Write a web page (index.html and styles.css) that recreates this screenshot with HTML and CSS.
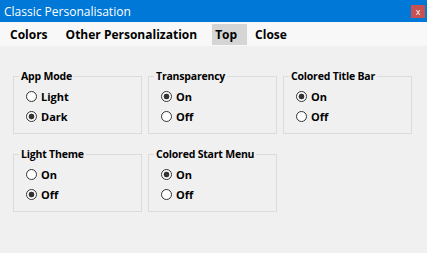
FILE: index.html
```html
<!DOCTYPE html>
<html lang="en">
<head>
    <meta charset="UTF-8">
    <title>Classic Personalisation</title>
    <link rel="stylesheet" href="styles.css">
</head>
<body>
    <div class="window">
        <div class="titlebar">
            <span class="title">Classic Personalisation</span>
            <button class="close-btn">x</button>
        </div>

        <nav class="menubar">
            <span class="menu-item">Colors</span>
            <span class="menu-item">Other Personalization</span>
            <span class="menu-item active">Top</span>
            <span class="menu-item">Close</span>
        </nav>

        <div class="options">
            <fieldset class="group">
                <legend>App Mode</legend>
                <label class="radio"><input type="radio" name="appMode" /><span>Light</span></label>
                <label class="radio"><input type="radio" name="appMode" checked /><span>Dark</span></label>
            </fieldset>
            <fieldset class="group">
                <legend>Transparency</legend>
                <label class="radio"><input type="radio" name="transparency" checked /><span>On</span></label>
                <label class="radio"><input type="radio" name="transparency" /><span>Off</span></label>
            </fieldset>
            <fieldset class="group">
                <legend>Colored Title Bar</legend>
                <label class="radio"><input type="radio" name="titleBar" checked /><span>On</span></label>
                <label class="radio"><input type="radio" name="titleBar" /><span>Off</span></label>
            </fieldset>
            <fieldset class="group">
                <legend>Light Theme</legend>
                <label class="radio"><input type="radio" name="lightTheme" /><span>On</span></label>
                <label class="radio"><input type="radio" name="lightTheme" checked /><span>Off</span></label>
            </fieldset>
            <fieldset class="group">
                <legend>Colored Start Menu</legend>
                <label class="radio"><input type="radio" name="startMenu" checked /><span>On</span></label>
                <label class="radio"><input type="radio" name="startMenu" /><span>Off</span></label>
            </fieldset>
        </div>
    </div>
</body>
</html>
```

FILE: styles.css
```css
html {
    box-sizing: border-box;
}
*, *:before, *:after {
    box-sizing: inherit;
}
body {
    margin: 0;
    font-family: 'Open Sans', 'Noto Sans', sans-serif;
    color: #000;
    background-color: #f0f0f0;
}
.window {
    width: 427px;
    height: 253px;
    overflow: hidden;
}
/* Title bar */
.titlebar {
    height: 22px;
    display: flex;
    align-items: center;
    justify-content: space-between;
    padding: 0 2px 0 4px;
    background: #0078d7;
    color: #fff;
}
.title {
    font-size: 12px;
}
.close-btn {
    width: 14px;
    height: 13px;
    margin-top: 1px;
    padding: 0;
    border: 0;
    background: #c75050;
    color: #fff;
    font-family: inherit;
    font-size: 9px;
    line-height: 12px;
}
/* Menu */
.menubar {
    height: 24px;
    display: flex;
    gap: 5px;
    padding: 2px 0 1px 7px;
    background: #f8f8f8;
}
.menu-item {
    display: flex;
    align-items: center;
    padding: 0 10px 0 3px;
    font-size: 12px;
    font-weight: 700;
}
.menu-item.active {
    background: #d5d5d5;
}
/* Group boxes */
.options {
    display: grid;
    grid-template-columns: 129px 129px 129px;
    column-gap: 6px;
    row-gap: 13px;
    padding: 23px 0 0 13px;
}
.group {
    margin: 0;
    min-width: 0;
    padding: 3px 0 7px 12px;
    border: 1px solid #dcdcdc;
}
.group legend {
    margin-left: -7px;
    padding: 0 2px;
    font-size: 10.5px;
    font-weight: 700;
    letter-spacing: -0.2px;
    line-height: 14px;
}
.radio {
    height: 20px;
    display: flex;
    align-items: center;
    gap: 4px;
    font-size: 11px;
    font-weight: 700;
}
.radio input {
    appearance: none;
    width: 11px;
    height: 11px;
    margin: 0;
    border: 1px solid #333;
    border-radius: 50%;
    background: #fff;
}
.radio input:checked {
    background: radial-gradient(circle, #333 0 2.6px, #fff 3.2px);
}
```
